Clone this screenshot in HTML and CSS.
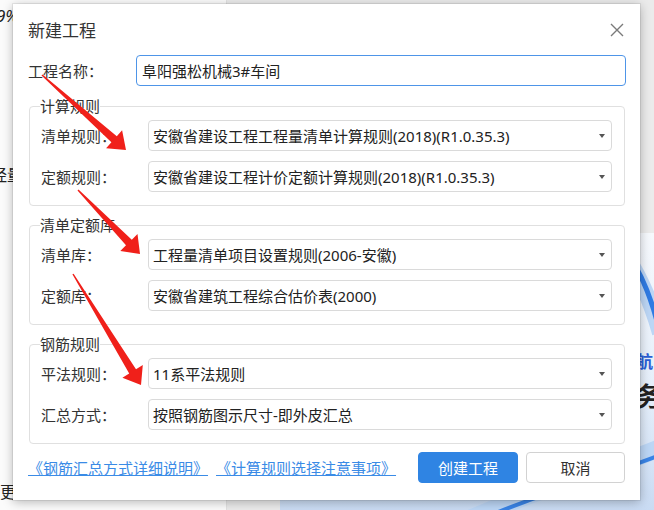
FILE: index.html
```html
<!DOCTYPE html>
<html lang="zh-CN">
<head>
  <meta charset="UTF-8">
  <title>新建工程</title>
  <link rel="stylesheet" href="styles.css">
</head>
<body>
  <div class="app">
    <aside class="side">
      <div class="side-stat">9%</div>
      <div class="side-item">经量</div>
      <div class="side-more">更</div>
    </aside>
    <section class="home">
      <div class="home-top"></div>
      <div class="banner">
        <svg class="banner-waves" width="374" height="277" viewBox="0 0 374 277">
          <path d="M 290 -30 C 330 -5, 360 30, 380 100" fill="none" stroke="#bcd6f5" stroke-width="16"/>
          <path d="M 300 -20 C 338 0, 362 30, 378 92" fill="none" stroke="#2f7be3" stroke-width="5"/>
          <path d="M 160 300 C 240 260, 320 240, 380 215" fill="none" stroke="#bcd6f5" stroke-width="18"/>
          <path d="M 170 300 C 250 262, 325 244, 380 222" fill="none" stroke="#3a84e6" stroke-width="4"/>
        </svg>
        <div class="banner-text">
          <div class="banner-sub">航</div>
          <div class="banner-title">务</div>
        </div>
      </div>
    </section>
  </div>

  <div class="dialog">
    <div class="dialog-head">
      <span class="dialog-title">新建工程</span>
      <button class="close" title="关闭">
        <svg width="14" height="14" viewBox="0 0 14 14"><path d="M1 1 L13 13 M13 1 L1 13" stroke="#7a7a7a" stroke-width="1.4" fill="none"/></svg>
      </button>
    </div>

    <div class="row name-row">
      <label>工程名称：</label>
      <input class="name-input" type="text" value="阜阳强松机械3#车间">
    </div>

    <fieldset class="group">
      <legend>计算规则</legend>
      <div class="rows">
        <div class="row">
          <label>清单规则：</label>
          <div class="select"><span>安徽省建设工程工程量清单计算规则(2018)(R1.0.35.3)</span><i class="caret"></i></div>
        </div>
        <div class="row">
          <label>定额规则：</label>
          <div class="select"><span>安徽省建设工程计价定额计算规则(2018)(R1.0.35.3)</span><i class="caret"></i></div>
        </div>
      </div>
    </fieldset>

    <fieldset class="group">
      <legend>清单定额库</legend>
      <div class="rows">
        <div class="row">
          <label>清单库：</label>
          <div class="select"><span>工程量清单项目设置规则(2006-安徽)</span><i class="caret"></i></div>
        </div>
        <div class="row">
          <label>定额库：</label>
          <div class="select"><span>安徽省建筑工程综合估价表(2000)</span><i class="caret"></i></div>
        </div>
      </div>
    </fieldset>

    <fieldset class="group">
      <legend>钢筋规则</legend>
      <div class="rows">
        <div class="row">
          <label>平法规则：</label>
          <div class="select"><span>11系平法规则</span><i class="caret"></i></div>
        </div>
        <div class="row">
          <label>汇总方式：</label>
          <div class="select"><span>按照钢筋图示尺寸-即外皮汇总</span><i class="caret"></i></div>
        </div>
      </div>
    </fieldset>

    <div class="dialog-foot">
      <a href="#" class="link">《钢筋汇总方式详细说明》</a>
      <a href="#" class="link">《计算规则选择注意事项》</a>
      <button class="btn btn-primary">创建工程</button>
      <button class="btn">取消</button>
    </div>
  </div>

  <!-- red annotation arrows -->
  <svg class="marks" width="654" height="510" viewBox="0 0 654 510">
    <polygon points="41.5,75.5 111.4,142.3 106.1,148.3 126,150 122.1,130.3 116.8,136.3 42.5,74.5" fill="#f0201a"/>
    <polygon points="77.5,190.5 126,245.3 120.3,250.9 140,254 137.5,234.1 131.8,239.7 78.5,189.5" fill="#f0201a"/>
    <polygon points="72.4,274.3 129.2,373.5 122.4,377.7 141,385 142.8,365.1 136,369.3 73.6,273.7" fill="#f0201a"/>
  </svg>
</body>
</html>
```

FILE: styles.css
```css
* { box-sizing: border-box; }
body {
  margin: 0;
  font-family: "Noto Sans", "Noto Sans CJK SC", sans-serif;
  font-size: 15px;
  color: #333;
  background: #ececec;
  overflow: hidden;
}

/* app behind the dialog */
.app {
  display: grid;
  grid-template-columns: 227px 1fr;
  height: 510px;
}
.side {
  display: flex;
  flex-direction: column;
  background: #fbfbfb;
  border-right: 1px solid #e2e2e2;
  color: #222;
}
.side-stat {
  margin: 6px 0 0 -4px;
  font-size: 17px;
  line-height: 20px;
  font-style: italic;
}
.side-item {
  margin: 139px 0 0 -9px;
  font-size: 16px;
  line-height: 20px;
}
.side-more {
  margin-top: auto;
  margin-bottom: 8px;
  font-size: 16px;
  line-height: 20px;
}
.home {
  display: flex;
  flex-direction: column;
  background: #ebebeb;
}
.home-top { height: 233px; }
.banner {
  flex: 1;
  margin-left: 53px;
  position: relative;
  overflow: hidden;
  background: linear-gradient(180deg, #f6f9fd 0%, #e4eefa 60%, #c9dbf3 100%);
}
.banner-waves {
  position: absolute;
  top: 0;
  left: 0;
}
.banner-text {
  position: relative;
  padding: 119px 0 0 356px;
}
.banner-sub {
  font-size: 17px;
  line-height: 20px;
  color: #2a5fd6;
  font-weight: bold;
}
.banner-title {
  margin-top: 8px;
  font-size: 26px;
  line-height: 32px;
  color: #222;
  font-weight: bold;
}

/* dialog */
.dialog {
  position: absolute;
  left: 13px;
  top: 4px;
  width: 627px;
  height: 496px;
  padding: 0 14px 0 15px;
  background: #fff;
  box-shadow: 0 0 0 1px rgba(0, 0, 0, 0.07), 0 2px 10px rgba(0, 0, 0, 0.28);
}
.dialog-head {
  height: 51px;
  display: flex;
  align-items: center;
  justify-content: space-between;
}
.dialog-title {
  font-size: 17px;
  color: #333;
}
.close {
  width: 14px;
  height: 14px;
  margin-right: 2px;
  padding: 0;
  border: none;
  background: none;
  display: flex;
  cursor: pointer;
}

.row {
  display: flex;
  align-items: center;
  height: 31px;
}
.row label {
  width: 107px;
  flex: none;
  color: #333;
}
.name-row label { width: 108px; }
.name-input {
  flex: 1;
  height: 31px;
  padding: 0 5px;
  border: 1px solid #4e95e8;
  border-radius: 4px;
  font: inherit;
  color: #222;
  outline: none;
}

.group {
  margin: 9px 1px 0 1px;
  padding: 4px 12px 13px 11px;
  border: 1px solid #e0e0e0;
  border-radius: 4px;
}
.name-row + .group { margin-top: 10px; }
.group legend {
  padding: 0;
  margin-left: -1px;
  line-height: 20px;
  color: #333;
}
.rows {
  display: flex;
  flex-direction: column;
  gap: 10px;
}
.select {
  flex: 1;
  height: 31px;
  display: flex;
  align-items: center;
  justify-content: space-between;
  padding: 0 6px 0 4px;
  border: 1px solid #dadada;
  border-radius: 4px;
  color: #222;
  white-space: nowrap;
}
.caret {
  width: 0;
  height: 0;
  border-left: 3px solid transparent;
  border-right: 3px solid transparent;
  border-top: 4px solid #555;
}

.dialog-foot {
  display: flex;
  align-items: center;
  height: 31px;
  margin: 8px 1px 0 0;
}
.link {
  color: #3a8be6;
  text-decoration: underline;
  margin-right: 8px;
}
.btn {
  width: 99px;
  height: 31px;
  margin-left: 8px;
  border: 1px solid #d2d2d2;
  border-radius: 4px;
  background: #fff;
  font: inherit;
  color: #333;
  cursor: pointer;
}
.btn-primary {
  width: 100px;
  margin-left: auto;
  border-color: #2f84e3;
  background: #2f84e3;
  color: #fff;
}

.marks {
  position: absolute;
  left: 0;
  top: 0;
  pointer-events: none;
}
```
